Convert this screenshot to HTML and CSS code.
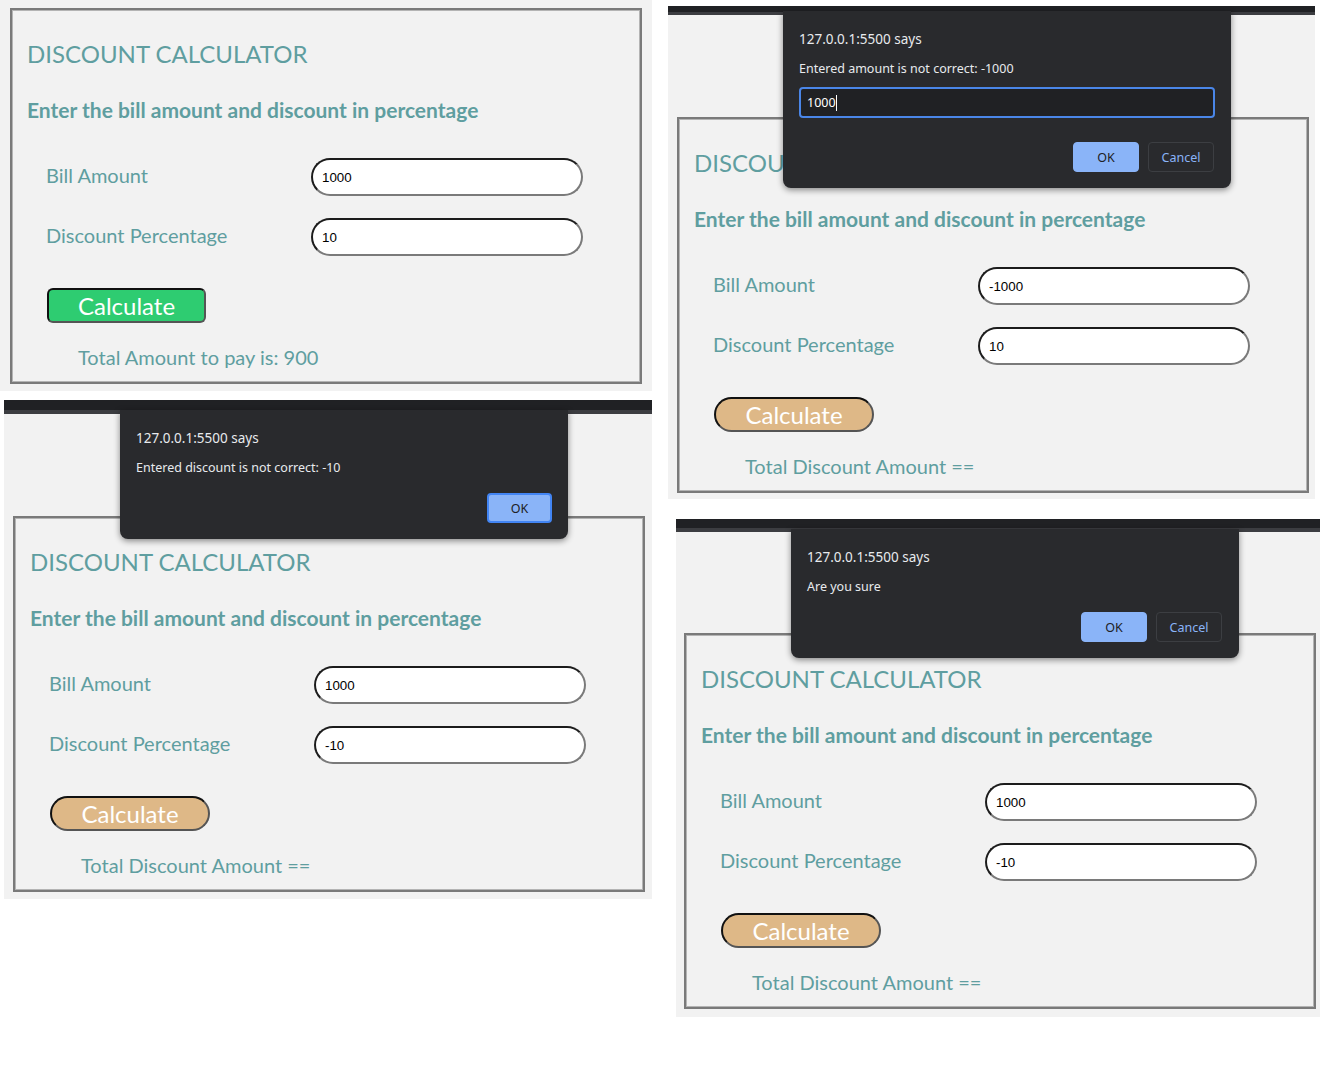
FILE: index.html
```html
<!DOCTYPE html>
<html lang="en">
<head>
<meta charset="utf-8">
<title>Discount Calculator</title>
<link rel="stylesheet" href="styles.css">
</head>
<body>

<section class="shot shot-1">
  <main class="calc">
    <h2 class="calc-title">DISCOUNT CALCULATOR</h2>
    <h3 class="calc-sub">Enter the bill amount and discount in percentage</h3>
    <div class="field"><label>Bill Amount</label><input type="text" value="1000"></div>
    <div class="field"><label>Discount Percentage</label><input type="text" value="10"></div>
    <button class="calc-btn green">Calculate</button>
    <p class="total">Total Amount to pay is: 900</p>
  </main>
</section>

<section class="shot shot-2">
  <div class="bar"></div>
  <main class="calc">
    <h2 class="calc-title">DISCOUNT CALCULATOR</h2>
    <h3 class="calc-sub">Enter the bill amount and discount in percentage</h3>
    <div class="field"><label>Bill Amount</label><input type="text" value="-1000"></div>
    <div class="field"><label>Discount Percentage</label><input type="text" value="10"></div>
    <button class="calc-btn tan">Calculate</button>
    <p class="total">Total Discount Amount ==</p>
  </main>
  <div class="dialog dialog-prompt">
    <div class="dlg-title">127.0.0.1:5500 says</div>
    <div class="dlg-msg">Entered amount is not correct: -1000</div>
    <div class="dlg-input"><span class="dlg-value">1000</span><span class="caret"></span></div>
    <div class="dlg-actions">
      <button class="dlg-btn ok">OK</button>
      <button class="dlg-btn cancel">Cancel</button>
    </div>
  </div>
</section>

<section class="shot shot-3">
  <div class="bar"></div>
  <main class="calc">
    <h2 class="calc-title">DISCOUNT CALCULATOR</h2>
    <h3 class="calc-sub">Enter the bill amount and discount in percentage</h3>
    <div class="field"><label>Bill Amount</label><input type="text" value="1000"></div>
    <div class="field"><label>Discount Percentage</label><input type="text" value="-10"></div>
    <button class="calc-btn tan">Calculate</button>
    <p class="total">Total Discount Amount ==</p>
  </main>
  <div class="dialog dialog-alert">
    <div class="dlg-title">127.0.0.1:5500 says</div>
    <div class="dlg-msg">Entered discount is not correct: -10</div>
    <div class="dlg-actions">
      <button class="dlg-btn ok focus">OK</button>
    </div>
  </div>
</section>

<section class="shot shot-4">
  <div class="bar"></div>
  <main class="calc">
    <h2 class="calc-title">DISCOUNT CALCULATOR</h2>
    <h3 class="calc-sub">Enter the bill amount and discount in percentage</h3>
    <div class="field"><label>Bill Amount</label><input type="text" value="1000"></div>
    <div class="field"><label>Discount Percentage</label><input type="text" value="-10"></div>
    <button class="calc-btn tan">Calculate</button>
    <p class="total">Total Discount Amount ==</p>
  </main>
  <div class="dialog dialog-confirm">
    <div class="dlg-title">127.0.0.1:5500 says</div>
    <div class="dlg-msg">Are you sure</div>
    <div class="dlg-actions">
      <button class="dlg-btn ok">OK</button>
      <button class="dlg-btn cancel">Cancel</button>
    </div>
  </div>
</section>

</body>
</html>
```

FILE: styles.css
```css
* { box-sizing: border-box; }

body {
  margin: 0;
  width: 1340px;
  height: 1066px;
  position: relative;
  overflow: hidden;
  background: #fff;
  font-family: Lato, "Open Sans", sans-serif;
}

/* collage of screenshots: each one sits at its own place on the canvas */
.shot {
  position: absolute;
  background: #f2f2f2;
  overflow: hidden;
}
.shot-1 { left: 0; top: 0; width: 652px; height: 391px; padding: 8px 0 0 10px; }
.shot-2 { left: 668px; top: 6px; width: 647px; height: 493px; }
.shot-3 { left: 4px; top: 400px; width: 648px; height: 499px; }
.shot-4 { left: 676px; top: 519px; width: 644px; height: 498px; }

.bar {
  background: #202124;
  border-bottom: 3px solid #3c3d41;
}
.shot-2 .bar { height: 9px; }
.shot-3 .bar { height: 14px; border-bottom-width: 4px; }
.shot-4 .bar { height: 13px; border-bottom-width: 4px; }

.shot-2 .calc { margin: 102px 0 0 9px; }
.shot-3 .calc { margin: 102px 0 0 9px; }
.shot-4 .calc { margin: 101px 0 0 8px; }

/* calculator card */
.calc {
  width: 632px;
  height: 376px;
  border: 2px solid #7a7a7a;
  box-shadow: inset 0 0 0 1px #b4b4b4;
  padding: 29px 0 0 15px;
  color: #5f9ea0;
}
.calc-title {
  margin: 0;
  font-size: 24px;
  line-height: 30px;
  font-weight: 400;
}
.calc-sub {
  margin: 26px 0 0;
  font-size: 21px;
  line-height: 30px;
  font-weight: 700;
}
.field {
  display: flex;
  align-items: center;
  height: 38px;
  margin-top: 33px;
  padding-left: 19px;
}
.field + .field { margin-top: 22px; }
.field label {
  width: 265px;
  flex: none;
  font-size: 20px;
  line-height: 24px;
  padding-bottom: 4px;
}
.field input {
  width: 272px;
  height: 38px;
  border-radius: 19px;
  border: 2px solid;
  border-color: #1c1c1c #7a7a7a #7a7a7a #1c1c1c;
  padding: 0 9px;
  font: 13.33px "Liberation Sans", Arial, sans-serif;
  color: #000;
  background: #fff;
  outline: none;
}
.calc-btn {
  display: block;
  margin: 32px 0 0 20px;
  width: 159px;
  height: 35px;
  border: 2px solid;
  border-color: #111 #555 #555 #111;
  padding: 0;
  font-family: Lato, "Open Sans", sans-serif;
  font-size: 24px;
  line-height: 31px;
  color: #fff;
}
.calc-btn.green { background: #2ecc71; border-radius: 6px; }
.calc-btn.tan { background: #deb887; border-radius: 18px; width: 160px; }
.total {
  margin: 21px 0 0 51px;
  font-size: 20px;
  line-height: 26px;
}

/* browser dialogs lying over the page */
.dialog {
  position: absolute;
  width: 448px;
  background: #292a2d;
  border-radius: 0 0 8px 8px;
  box-shadow: 0 2px 6px rgba(0, 0, 0, 0.45);
  padding: 18px 17px 16px 16px;
  font-family: "Noto Sans", "Open Sans", sans-serif;
  color: #e8eaed;
}
.shot-2 .dialog { left: 115px; top: 5px; }
.shot-3 .dialog { left: 116px; top: 10px; padding-right: 16px; }
.shot-4 .dialog { left: 115px; top: 10px; }

.dlg-title { font-size: 13.5px; line-height: 20px; }
.dlg-msg { margin-top: 10px; font-size: 12.5px; line-height: 20px; }
.dlg-input {
  display: flex;
  align-items: center;
  margin: 8px -1px 0 0;
  height: 31px;
  background: #202124;
  border: 2px solid #4a86e8;
  border-radius: 4px;
  padding-left: 6px;
  font-size: 12.5px;
  color: #fff;
}
.caret {
  width: 1px;
  height: 16px;
  background: #fff;
}
.dlg-actions {
  display: flex;
  justify-content: flex-end;
  gap: 9px;
  margin-top: 15px;
}
.dialog-prompt .dlg-actions { margin-top: 24px; }
.dlg-btn {
  width: 66px;
  height: 30px;
  border-radius: 4px;
  padding: 0;
  font-family: "Noto Sans", "Open Sans", sans-serif;
  font-size: 12.5px;
}
.dlg-btn.ok {
  background: #8ab4f8;
  border: 1px solid #8ab4f8;
  color: #202124;
}
.dlg-btn.ok.focus {
  width: 65px;
  border: 2px solid #4285f4;
}
.dlg-btn.cancel {
  background: transparent;
  border: 1px solid #3c3e42;
  color: #8ab4f8;
}
```
